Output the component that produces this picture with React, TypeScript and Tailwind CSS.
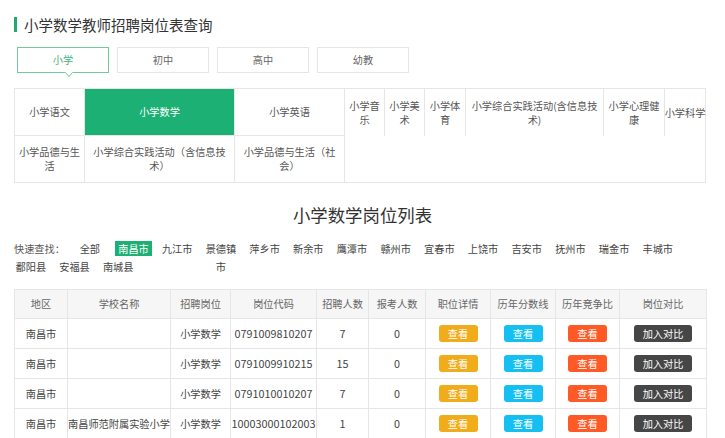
import React from 'react';

const tabs = ['小学', '初中', '高中', '幼教'];

const cities = [
  '全部', '南昌市', '九江市', '景德镇市', '萍乡市', '新余市', '鹰潭市', '赣州市',
  '宜春市', '上饶市', '吉安市', '抚州市', '瑞金市', '丰城市', '鄱阳县', '安福县', '南城县',
];

const rightSubjects = [
  { name: '小学音乐', w: 'w-[40px] border-r' },
  { name: '小学美术', w: 'w-[40px] border-r' },
  { name: '小学体育', w: 'w-[41px] border-r' },
  { name: '小学综合实践活动(含信息技术)', w: 'w-[138px] border-r' },
  { name: '小学心理健康', w: 'w-[61px] border-r' },
  { name: '小学科学', w: 'w-[40px] whitespace-nowrap' },
];

const rows = [
  { area: '南昌市', school: '', post: '小学数学', code: '0791009810207', num: 7, apply: 0 },
  { area: '南昌市', school: '', post: '小学数学', code: '0791009910215', num: 15, apply: 0 },
  { area: '南昌市', school: '', post: '小学数学', code: '0791010010207', num: 7, apply: 0 },
  { area: '南昌市', school: '南昌师范附属实验小学', post: '小学数学', code: '10003000102003', num: 1, apply: 0 },
];

const heads = ['地区', '学校名称', '招聘岗位', '岗位代码', '招聘人数', '报考人数', '职位详情', '历年分数线', '历年竞争比', '岗位对比'];
const colW = [53, 103, 60, 86, 52, 57, 65, 65, 64, 87];

const Btn = ({ color, wide, children }: { color: string; wide?: boolean; children: React.ReactNode }) => (
  <span className={`inline-block h-[17px] rounded-[3px] text-center text-[10.2px] leading-[17px] text-white ${wide ? 'w-[58px]' : 'w-[39px]'} ${color}`}>
    {children}
  </span>
);

export default function App() {
  return (
    <div className="h-[438px] w-[725px] overflow-hidden bg-white pt-[17px] font-['Noto_Sans_CJK_SC',sans-serif] text-[10.2px] text-[#555]">
      {/* title */}
      <div className="ml-[14px] flex h-[15px] items-center">
        <span className="h-[15px] w-[3px] bg-[#1fab6f]" />
        <span className="ml-[7px] text-[14.5px] leading-[15px] text-[#333]">小学数学教师招聘岗位表查询</span>
      </div>

      {/* level tabs */}
      <div className="ml-[17px] mt-[15px] flex gap-[8px]">
        {tabs.map((t, i) => (
          <div
            key={t}
            className={`relative flex h-[26px] w-[92px] items-center justify-center border ${
              i === 0 ? 'border-[#72c99d] text-[#3fb37c]' : 'border-[#e6e6e6] text-[#666]'
            }`}
          >
            {t}
            {i === 0 && (
              <svg className="absolute left-[47px] top-[24px]" width="8" height="6" viewBox="0 0 8 6">
                <polygon points="0,0 8,0 4,5" fill="#fff" />
                <polyline points="0.5,0.5 4,4.5 7.5,0.5" fill="none" stroke="#72c99d" strokeWidth="1" />
              </svg>
            )}
          </div>
        ))}
      </div>

      {/* subjects */}
      <div className="ml-[14px] mt-[15px] flex h-[95px] w-[692px] border border-[#e6e6e6]">
        <div className="grid grid-cols-[70px_150px_110px] grid-rows-[47px_46px] leading-[14px]">
          <div className="flex items-center justify-center border-b border-r border-[#e6e6e6] px-[2px] text-center">小学语文</div>
          <div className="flex items-center justify-center border-b border-r border-[#e6e6e6] bg-[#1db074] px-[2px] text-center text-white">小学数学</div>
          <div className="flex items-center justify-center border-b border-r border-[#e6e6e6] px-[2px] text-center">小学英语</div>
          <div className="flex items-center justify-center border-r border-[#e6e6e6] px-[2px] text-center">小学品德与生活</div>
          <div className="flex items-center justify-center border-r border-[#e6e6e6] px-[6px] text-center">小学综合实践活动（含信息技术）</div>
          <div className="flex items-center justify-center border-r border-[#e6e6e6] px-[6px] text-center">小学品德与生活（社会）</div>
        </div>
        <div className="flex h-[47px]">
          {rightSubjects.map((s) => (
            <div key={s.name} className={`flex items-center justify-center border-[#e6e6e6] px-[1px] text-center leading-[14px] ${s.w}`}>
              {s.name}
            </div>
          ))}
        </div>
      </div>

      {/* list heading */}
      <div className="mt-[23px] h-[18px] text-center text-[17.4px] leading-[18px] text-[#333]">小学数学岗位列表</div>

      {/* quick find */}
      <div className="ml-[9px] mt-[16px] flex w-[697px] flex-wrap leading-[18px] text-[#444]">
        <div className="h-[18px] w-[59px] pl-[5px] text-[#555]">快速查找：</div>
        {cities.map((c, i) => (
          <div key={c} className="h-[18px] w-[43.7px] px-[3px] text-center">
            {i === 1 ? (
              <span className="inline-block bg-[#1db074] px-[3px] leading-[15px] text-white">{c}</span>
            ) : (
              c
            )}
          </div>
        ))}
      </div>

      {/* post table */}
      <table className="ml-[14px] mt-[13px] w-[692px] table-fixed border-collapse text-center">
        <colgroup>
          {colW.map((w, i) => (
            <col key={i} style={{ width: w }} />
          ))}
        </colgroup>
        <thead>
          <tr className="h-[29px] bg-[#f6f6f6] text-[#666]">
            {heads.map((h) => (
              <th key={h} className="border border-[#e6e6e6] p-0 font-normal">{h}</th>
            ))}
          </tr>
        </thead>
        <tbody className="text-[#444]">
          {rows.map((r, i) => (
            <tr key={i} className="h-[30px]">
              <td className="border border-[#e6e6e6] p-0">{r.area}</td>
              <td className="whitespace-nowrap border border-[#e6e6e6] p-0">{r.school}</td>
              <td className="border border-[#e6e6e6] p-0">{r.post}</td>
              <td className="whitespace-nowrap border border-[#e6e6e6] p-0 text-[10.8px]">{r.code}</td>
              <td className="border border-[#e6e6e6] p-0 text-[10.8px]">{r.num}</td>
              <td className="border border-[#e6e6e6] p-0 text-[10.8px]">{r.apply}</td>
              <td className="border border-[#e6e6e6] p-0"><Btn color="bg-[#f1ac1c]">查看</Btn></td>
              <td className="border border-[#e6e6e6] p-0"><Btn color="bg-[#15bff1]">查看</Btn></td>
              <td className="border border-[#e6e6e6] p-0"><Btn color="bg-[#ff5926]">查看</Btn></td>
              <td className="border border-[#e6e6e6] p-0"><Btn color="bg-[#464646]" wide>加入对比</Btn></td>
            </tr>
          ))}
        </tbody>
      </table>
    </div>
  );
}
